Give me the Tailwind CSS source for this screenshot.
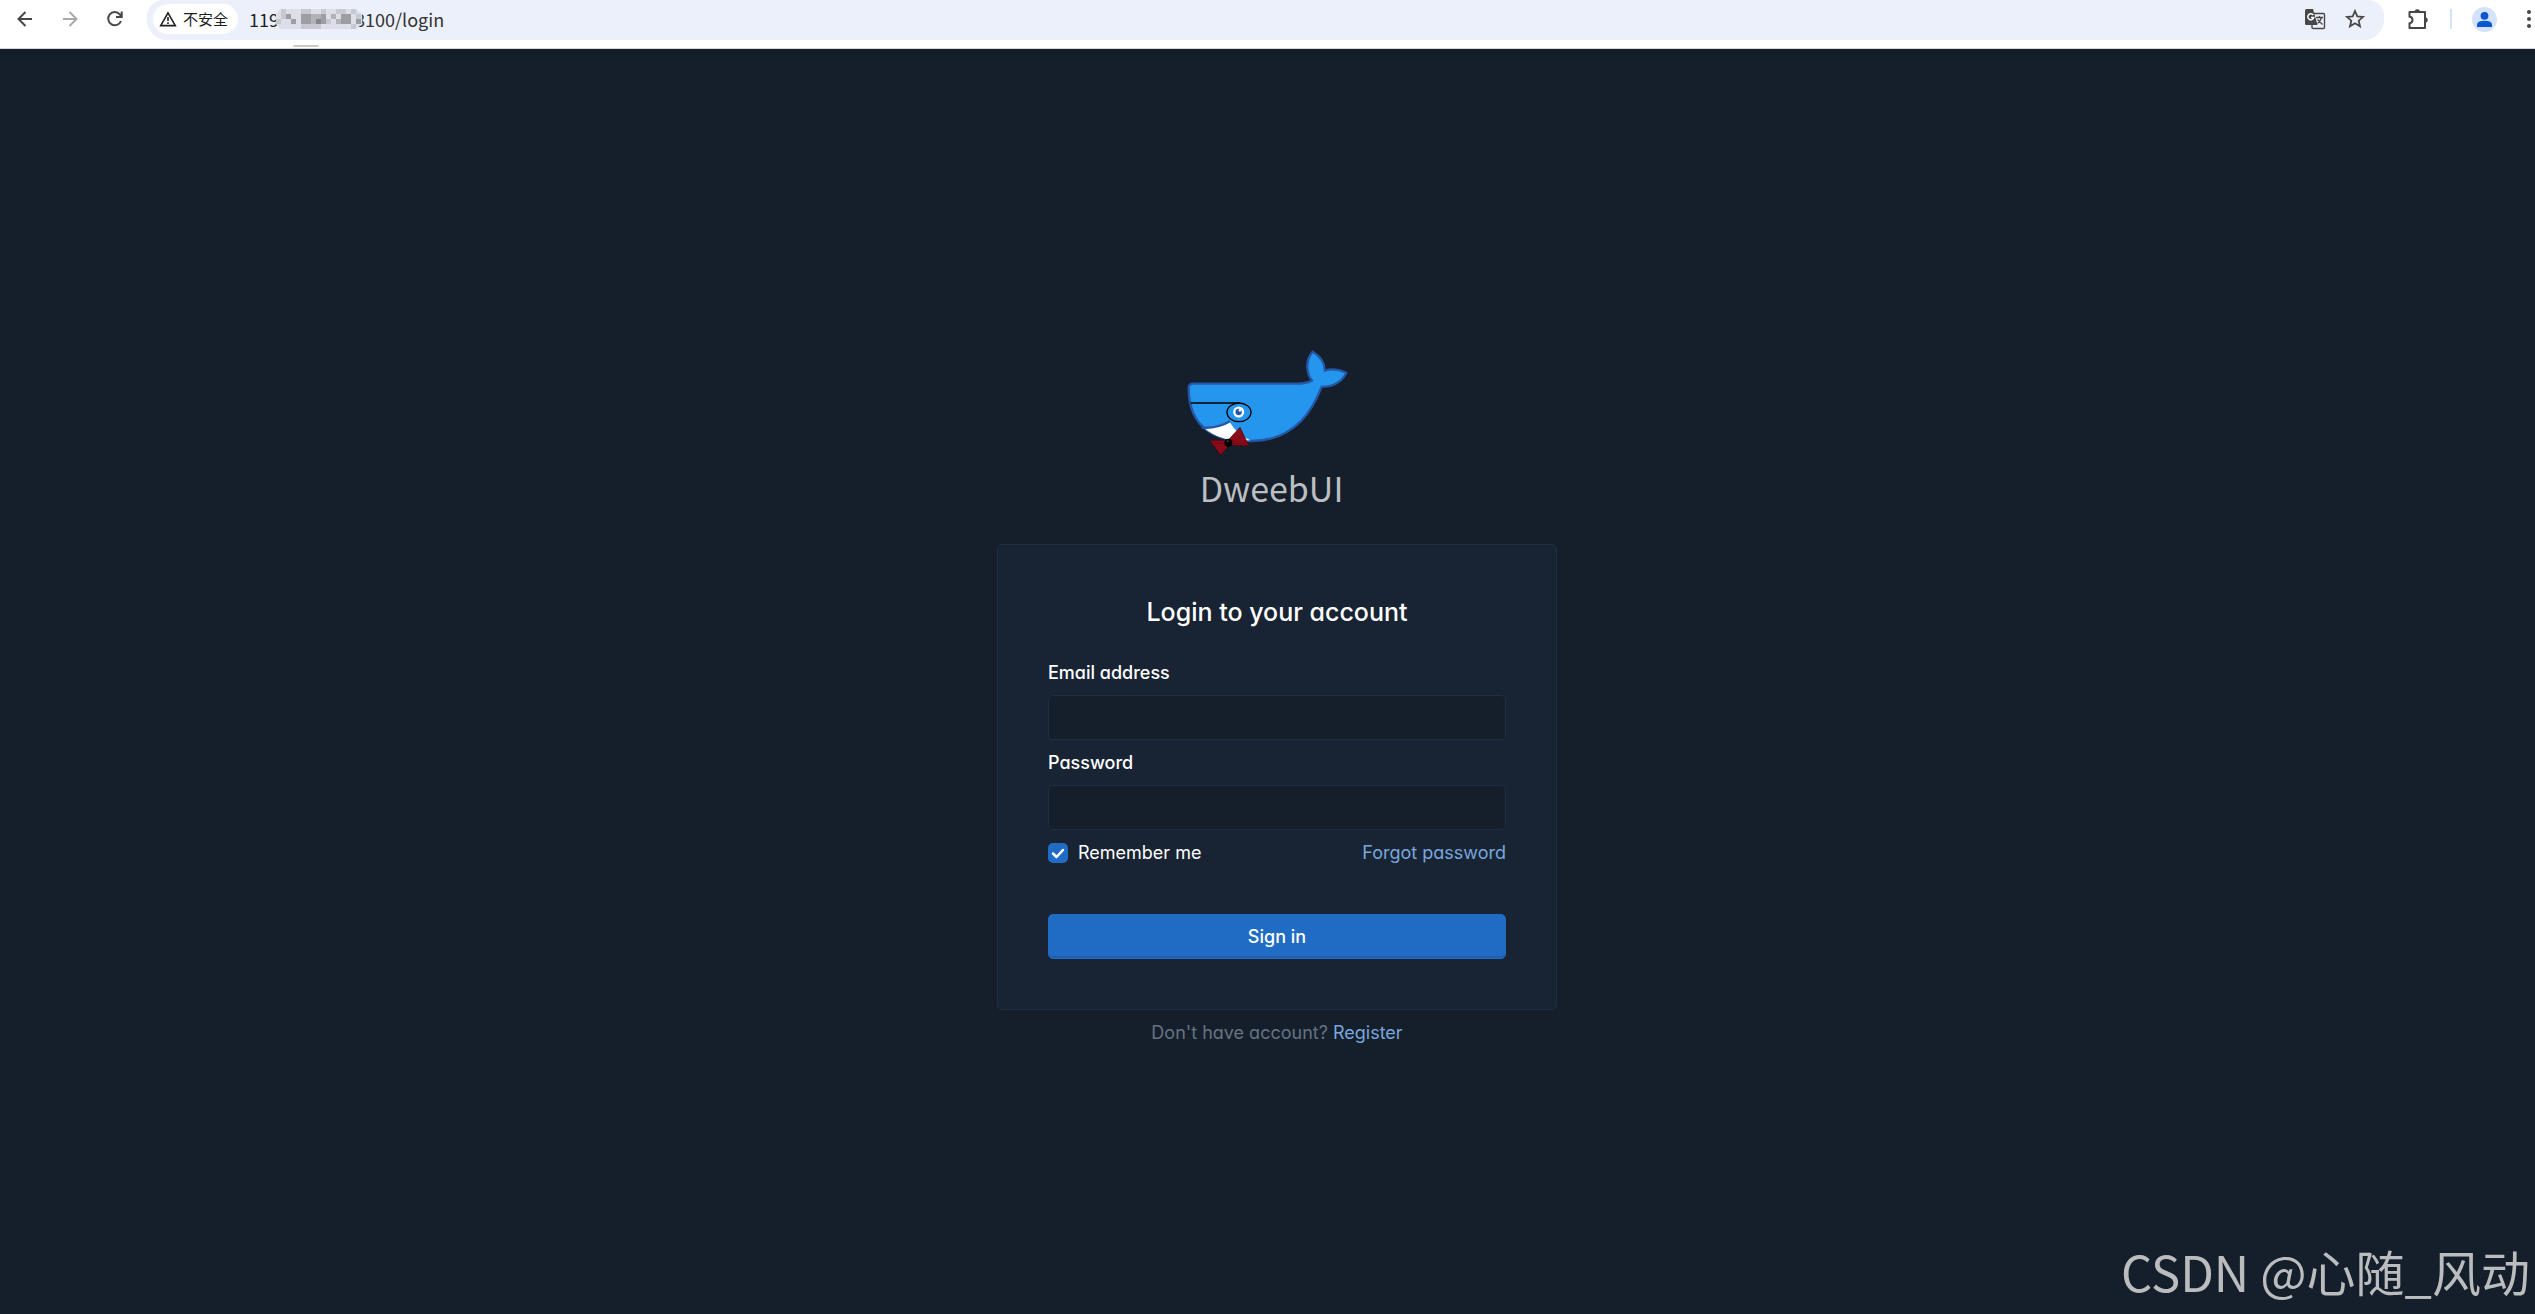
<!DOCTYPE html>
<html lang="en">
<head>
    <meta charset="UTF-8">
    <meta name="viewport" content="width=device-width, initial-scale=1.0">
    <title>DweebUI - Login</title>
    <script src="https://cdn.jsdelivr.net/npm/@tailwindcss/browser@4"></script>
</head>
<body class="min-h-screen flex flex-col bg-[#151f2c] font-['Inter','Noto_Sans_CJK_SC',sans-serif]">
    <!-- Browser toolbar -->
    <header class="relative flex items-start h-[49px] pl-[14px] pr-[3px] bg-white border-b border-[#d5dad9] text-[#474747] font-['Noto_Sans_CJK_SC',sans-serif]">
        <nav class="flex items-center gap-[23px] h-[38px]">
            <button type="button" aria-label="Back">
                <svg class="w-[22px] h-[22px]" viewBox="0 0 22 22" fill="none" stroke="currentColor" stroke-width="2"><path d="M18 11H5M11.500 4L4.500 11L11.500 18"/></svg>
            </button>
            <button type="button" aria-label="Forward" class="text-[#a9a9a9]">
                <svg class="w-[22px] h-[22px]" viewBox="0 0 22 22" fill="none" stroke="currentColor" stroke-width="2"><path d="M4 11H17M10.500 4L17.500 11L10.500 18"/></svg>
            </button>
            <button type="button" aria-label="Reload">
                <svg class="w-[22px] h-[22px]" viewBox="0 0 22 22" fill="none" stroke="currentColor" stroke-width="2"><path d="M17 13A6.600 6.600 0 1 1 15.800 6.300L17 8"/><path d="M17.700 3.500V9H12"/></svg>
            </button>
        </nav>

        <!-- Address bar -->
        <div class="flex flex-1 items-center h-10 ml-[21px] pl-[6px] pr-[18px] pb-[2px] rounded-b-[20px] rounded-t-[16px] bg-[#ecf0fa]">
            <button type="button" class="flex items-center gap-[6px] h-[30px] pl-[6px] pr-[10px] rounded-full bg-white text-[15px] leading-5 text-[#1f1f1f]">
                <svg class="w-[18px] h-[18px]" viewBox="0 0 18 18" fill="none" stroke="currentColor" stroke-width="1.600"><path d="M9 2.800L16.300 15.600H1.700Z"/><path d="M9 7V11M9 12.200V14"/></svg>
                <span>不安全</span>
            </button>
            <div class="flex items-center ml-[11px] text-[18px] leading-6 text-[#333]">
                <span class="text-[#1f1f1f]">119</span>
                <svg class="relative w-[86px] h-5 -ml-[3px] -mr-[7px]" viewBox="0 0 86 20">
                    <path fill="#dcdfe8" d="M4 0H80L86 5V15L80 20H4L0 15V5Z"/>
                    <path fill="#c6c9d1" d="M5 0h5v10H5zM0 10h5v5H0zM25 0h10v5H25zM45 0h5v10h-5zM60 0h10v5H60zM25 15h20v5H25zM50 10h5v5h-5zM75 0h5v5h-5zM80 5h5v5h-5zM75 15h5v5h-5z"/>
                    <path fill="#9c9ea4" d="M10 5h5v5h-5zM15 10h5v5h-5zM25 5h10v10H25zM45 5h5v10h-5zM65 5h10v10H65zM80 10h5v5h-5z"/>
                    <path fill="#b0b3ba" d="M35 5h10v10H35zM55 5h5v5h-5zM60 10h5v5h-5z"/>
                    <path fill="#85878d" d="M40 10h5v5h-5z"/>
                </svg>
                <span>8100/login</span>
            </div>
            <div class="flex items-center gap-[18px] ml-auto">
                <button type="button" aria-label="Translate">
                    <svg class="w-[22px] h-[22px]" viewBox="0 0 22 22" fill="none">
                        <rect x="8" y="5.500" width="12.500" height="15" rx="1" stroke="#474747" stroke-width="1.400"/>
                        <path fill="#474747" d="M2.500 1H9L13.500 17H2.500Q1 17 1 15.500V2.500Q1 1 2.500 1Z"/>
                        <path stroke="#fff" stroke-width="1.500" d="M9.300 7A3 3 0 1 0 9.700 9.500H7"/>
                        <path stroke="#474747" stroke-width="1.300" d="M12 9.500H19M15.500 8V9.500M17.500 9.500Q16.500 13.500 13.500 15.500M13.500 11.500L18.500 16.500"/>
                    </svg>
                </button>
                <button type="button" aria-label="Bookmark">
                    <svg class="w-[22px] h-[22px]" viewBox="0 0 22 22" fill="none" stroke="currentColor" stroke-width="1.800"><path d="M11 3L13.300 8.400L19 8.900L14.700 12.700L16 18.300L11 15.300L6 18.300L7.300 12.700L3 8.900L8.700 8.400Z"/></svg>
                </button>
            </div>
        </div>

        <div class="flex items-center h-[38px] ml-[22px]">
            <button type="button" aria-label="Extensions">
                <svg class="w-6 h-6" viewBox="0 0 24 24"><path fill="none" stroke="currentColor" stroke-width="2" stroke-linejoin="round" d="M3.500 5H19V21H3.500V16.200Q6.500 16 6.500 13Q6.500 10 3.500 9.800Z"/><path fill="currentColor" d="M8.500 5A2.700 2.700 0 0 1 14 5ZM19 10.300A2.700 2.700 0 0 1 19 15.700Z"/></svg>
            </button>
            <span class="w-[2px] h-5 ml-5 bg-[#d3e3fd]"></span>
            <button type="button" aria-label="Profile" class="ml-5">
                <svg class="w-[25px] h-[25px]" viewBox="0 0 25 25"><circle cx="12.500" cy="12.500" r="12.500" fill="#d3e3fd"/><circle cx="12.500" cy="8.800" r="3.900" fill="#0b57d0"/><path fill="#0b57d0" d="M5 20V17.800Q5 13.800 12.500 13.800T20 17.800V20Z"/></svg>
            </button>
            <button type="button" aria-label="Menu" class="ml-[29px]">
                <svg class="w-[6px] h-5" viewBox="0 0 6 20" fill="currentColor"><circle cx="3" cy="3" r="2"/><circle cx="3" cy="10" r="2"/><circle cx="3" cy="17" r="2"/></svg>
            </button>
        </div>
        <span class="absolute left-[293px] top-[45px] w-[26px] h-[2px] rounded-b bg-[#c9c9c9]"></span>
    </header>

    <main class="flex flex-col items-center pt-[301px] text-[18px] leading-[25px] text-white [font-feature-settings:'cv11']">
        <!-- Logo -->
        <svg class="w-[161px] h-[106px]" viewBox="50 57 483 318" role="img" aria-label="DweebUI whale">
            <path fill="#2496ed" stroke="#2557a7" stroke-width="7" stroke-linejoin="round" d="M68 158H375Q405 159 425 149C409 128 403 89 427 62C450 76 464 97 463 119C485 112 506 115 528 126C513 153 487 168 454 167C424 247 367 330 243 330C145 331 55 300 55 170Q56 158 68 158Z"/>
            <path fill="#fff" d="M101 291Q142 294 178 273Q202 313 240 328Q155 336 101 291Z"/>
            <path fill="none" stroke="#2557a7" stroke-width="7" d="M94 290Q142 293 179 271"/>
            <circle cx="205" cy="243" r="13" fill="#2557a7" stroke="#fff" stroke-width="7"/>
            <circle cx="209" cy="238" r="4" fill="#fff"/>
            <path fill="none" stroke="#000" stroke-width="4" d="M61 216H207"/>
            <ellipse cx="206" cy="244" rx="36" ry="28" fill="none" stroke="#000" stroke-width="4"/>
            <path fill="#8b0a1a" stroke="#3c0610" stroke-width="2" d="M174 327L118 328L151 373L177 342L236 345L209 289Z"/>
            <path fill="none" stroke="#6b0612" stroke-width="2" d="M168 335L135 338M182 333L212 318M182 338L222 337"/>
            <circle cx="174" cy="335" r="12" fill="#000"/>
            <circle cx="172" cy="331" r="3" fill="#444"/>
        </svg>
        <h1 class="mb-6 pl-2 text-[34px] leading-16 text-[#bcbec2] font-['Noto_Sans_CJK_SC',sans-serif]">DweebUI</h1>

        <!-- Login card -->
        <div class="flex flex-col items-center pl-[19px]">
            <form class="w-[560px] p-[50px] rounded-[5px] border border-[#1f2e41] bg-[#182433]">
                <h2 class="mb-[30px] text-center text-[25px] leading-[35px] font-medium">Login to your account</h2>
                <label for="email" class="block mb-[10px] font-medium">Email address</label>
                <input id="email" type="email" class="block w-full h-[45px] mb-[10px] px-[15px] rounded-[5px] border border-[#1f2e41] bg-[#151f2c]">
                <label for="password" class="block mb-[10px] font-medium">Password</label>
                <input id="password" type="password" class="block w-full h-[45px] mb-[10px] px-[15px] rounded-[5px] border border-[#1f2e41] bg-[#151f2c]">
                <div class="flex justify-between mb-[49px]">
                    <label for="remember" class="flex items-center gap-[10px]">
                        <span class="grid">
                            <input id="remember" type="checkbox" checked class="col-start-1 row-start-1 appearance-none w-5 h-5 rounded-[5px] bg-[#206bc4]">
                            <svg class="col-start-1 row-start-1 w-5 h-5 pointer-events-none" viewBox="0 0 20 20" fill="none" stroke="#fff" stroke-width="2.500" stroke-linecap="round" stroke-linejoin="round"><path d="M5 10.500L8.500 14L15 7"/></svg>
                        </span>
                        Remember me
                    </label>
                    <a href="#" class="text-[#79a6dc]">Forgot password</a>
                </div>
                <button type="submit" class="block w-full h-[45px] rounded-[5px] border border-[#206bc4] bg-[#206bc4] font-medium shadow-[inset_0_-2px_0_rgba(24,36,51,0.15)]">Sign in</button>
            </form>
            <p class="mt-[10px] text-[#667382]">Don't have account? <a href="#" class="text-[#79a6dc]">Register</a></p>
        </div>
    </main>

    <footer class="fixed right-[5px] bottom-2 text-[49px] leading-[70px] text-[#bbbcbe] font-['Noto_Sans_CJK_SC',sans-serif]">CSDN @心随_风动</footer>
</body>
</html>
